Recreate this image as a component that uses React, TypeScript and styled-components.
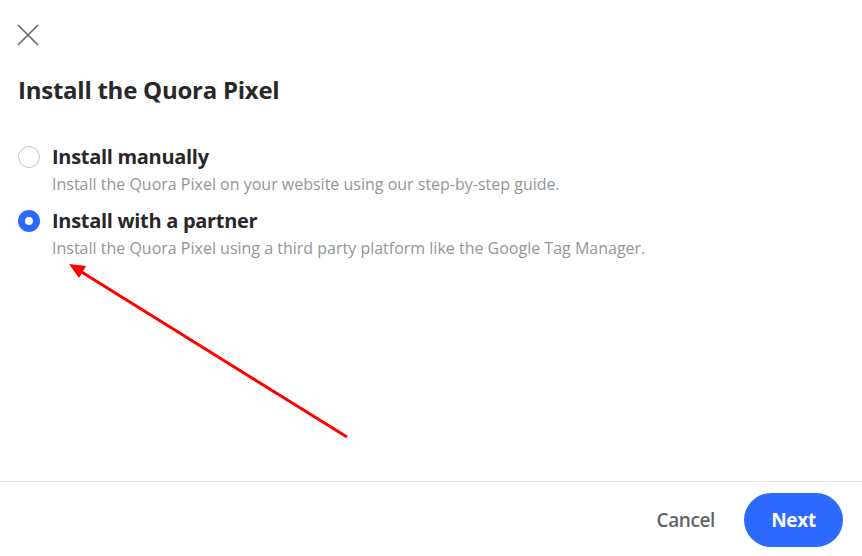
import React from "react";
import styled, { createGlobalStyle } from "styled-components";

const Global = createGlobalStyle`
  html, body { margin: 0; padding: 0; background: #fff; }
  body { font-family: "Open Sans", "Noto Sans", Arial, sans-serif; }
  * { box-sizing: border-box; }
`;

const Page = styled.div`
  position: relative;
  width: 862px;
  height: 556px;
  display: flex;
  flex-direction: column;
  background: #fff;
  overflow: hidden;
`;

const Body = styled.div`
  flex: 1;
  padding: 24px 18px 0 18px;
  display: flex;
  flex-direction: column;
`;

const CloseButton = styled.button`
  width: 22px;
  height: 22px;
  padding: 0;
  margin: 0 0 0 -1px;
  border: none;
  background: transparent;
  display: flex;
  align-items: center;
  justify-content: center;
  cursor: pointer;
`;

const Title = styled.h1`
  margin: 28px 0 0 0;
  font-size: 24px;
  line-height: 32px;
  font-weight: 700;
  color: #282829;
  letter-spacing: -0.25px;
`;

const Options = styled.div`
  margin-top: 38px;
  display: flex;
  flex-direction: column;
  gap: 13px;
`;

const Option = styled.label`
  display: flex;
  align-items: flex-start;
  gap: 12px;
  cursor: pointer;
`;

const Radio = styled.span<{ $checked: boolean }>`
  flex: none;
  width: 22px;
  height: 22px;
  margin-top: 2px;
  border-radius: 50%;
  border: ${(p) => (p.$checked ? "7px solid #2e69ff" : "1.5px solid #c4c4c4")};
  background: #fff;
`;

const OptionText = styled.div`
  display: flex;
  flex-direction: column;
`;

const OptionTitle = styled.div`
  font-size: 20px;
  line-height: 26px;
  font-weight: 700;
  color: #282829;
  letter-spacing: -0.3px;
`;

const OptionDesc = styled.div`
  margin-top: 3px;
  font-size: 16px;
  line-height: 22px;
  color: #939598;
`;

const Footer = styled.div`
  flex: none;
  height: 75px;
  border-top: 1px solid #e6e6e6;
  display: flex;
  align-items: center;
  justify-content: flex-end;
  gap: 29px;
  padding: 2px 19px 0 0;
`;

const CancelButton = styled.button`
  border: none;
  background: transparent;
  font-family: inherit;
  font-size: 19px;
  font-weight: 600;
  color: #636466;
  padding: 0;
  cursor: pointer;
  letter-spacing: -0.4px;
`;

const NextButton = styled.button`
  width: 99px;
  height: 54px;
  border: none;
  border-radius: 27px;
  background: #2e69ff;
  color: #fff;
  font-family: inherit;
  font-size: 19px;
  font-weight: 700;
  cursor: pointer;
  letter-spacing: -0.3px;
`;

const Annotation = styled.svg`
  position: absolute;
  left: 0;
  top: 0;
  pointer-events: none;
`;

export default function App() {
  return (
    <Page>
      <Global />
      <Body>
        <CloseButton aria-label="Close">
          <svg width="22" height="22" viewBox="0 0 22 22">
            <path d="M1 1 L21 21 M21 1 L1 21" stroke="#666" strokeWidth="1.6" fill="none" />
          </svg>
        </CloseButton>
        <Title>Install the Quora Pixel</Title>
        <Options>
          <Option>
            <Radio $checked={false} />
            <OptionText>
              <OptionTitle>Install manually</OptionTitle>
              <OptionDesc>Install the Quora Pixel on your website using our step-by-step guide.</OptionDesc>
            </OptionText>
          </Option>
          <Option>
            <Radio $checked={true} />
            <OptionText>
              <OptionTitle>Install with a partner</OptionTitle>
              <OptionDesc>
                Install the Quora Pixel using a third party platform like the Google Tag Manager.
              </OptionDesc>
            </OptionText>
          </Option>
        </Options>
      </Body>
      <Footer>
        <CancelButton>Cancel</CancelButton>
        <NextButton>Next</NextButton>
      </Footer>
      <Annotation width="862" height="556" viewBox="0 0 862 556">
        <line x1="347" y1="437" x2="80" y2="271" stroke="#ff0000" strokeWidth="3" />
        <polygon points="69,264 86,266 79,278" fill="#ff0000" />
      </Annotation>
    </Page>
  );
}
